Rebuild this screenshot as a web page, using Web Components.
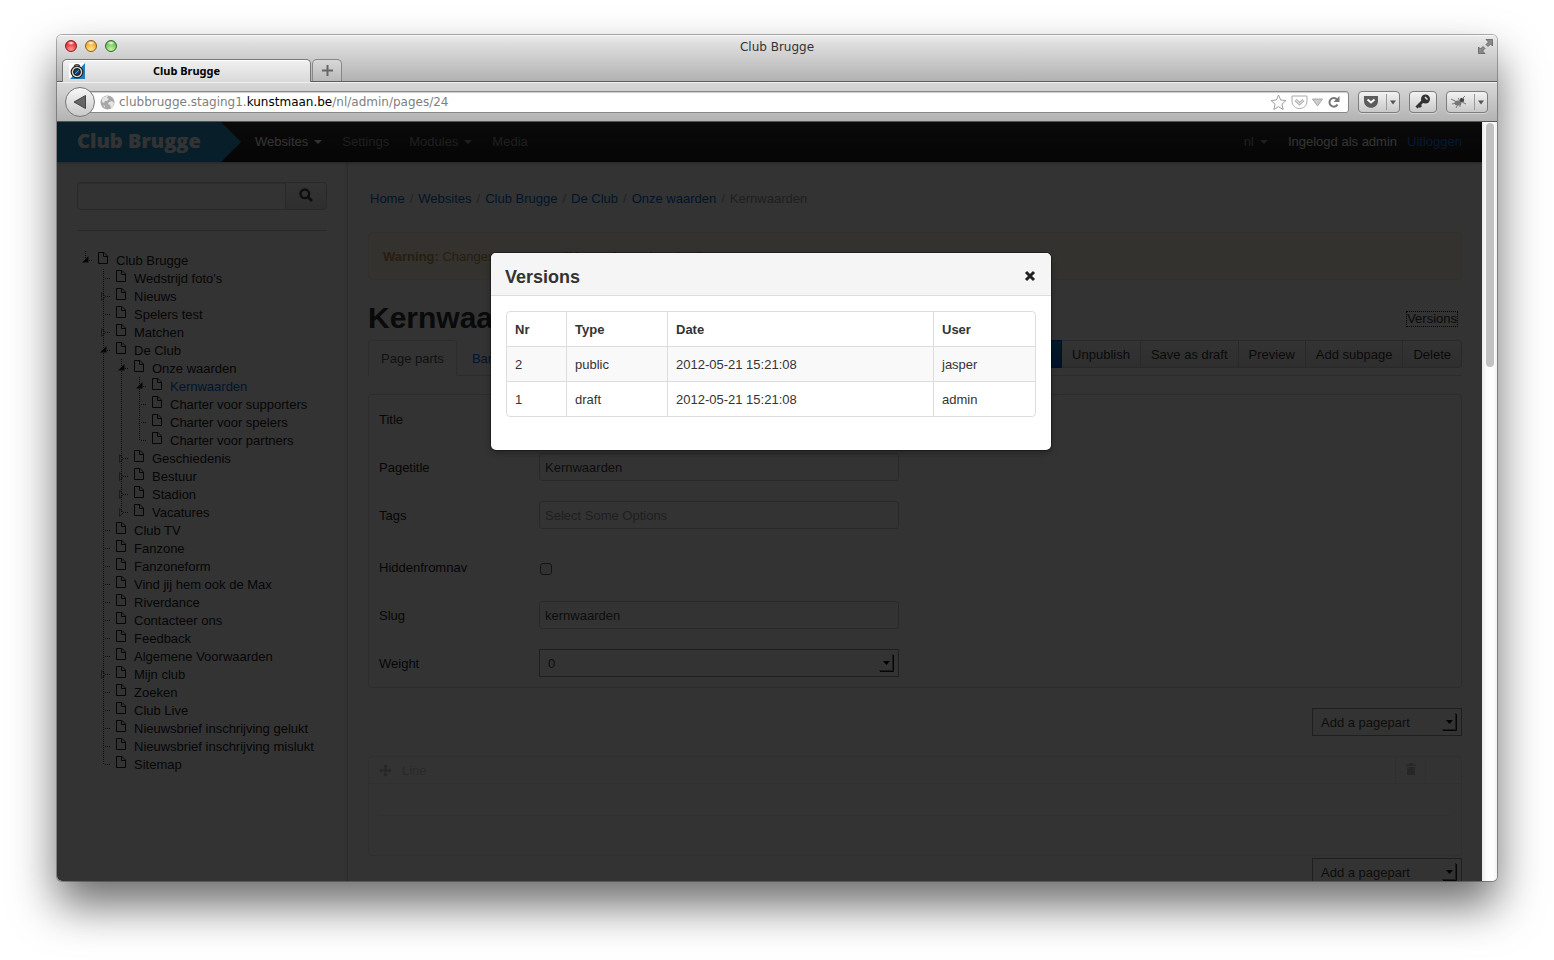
<!DOCTYPE html>
<html lang="nl">
<head>
<meta charset="utf-8">
<meta name="viewport" content="width=device-width, initial-scale=1">
<title>Club Brugge</title>
<style>
  html, body { margin: 0; height: 100%; }
  body {
    box-sizing: border-box;
    padding: 35px 57px 79px;
    overflow: hidden;
    background: #fff;
    --ui-font: "Liberation Sans", Arial, sans-serif;
    --chrome-font: "DejaVu Sans", sans-serif;
    --link: #0069d6;
    font: 13px/18px var(--ui-font);
    color: #333;
  }
</style>
</head>
<body>
<browser-window>
  <browser-titlebar slot="chrome"></browser-titlebar>
  <browser-toolbar slot="chrome"></browser-toolbar>
  <admin-navbar></admin-navbar>
  <admin-layout>
    <admin-sidebar slot="side"></admin-sidebar>
    <page-header></page-header>
    <page-form></page-form>
    <add-pagepart></add-pagepart>
    <page-part></page-part>
    <add-pagepart></add-pagepart>
  </admin-layout>
  <versions-modal slot="overlay"></versions-modal>
</browser-window>

<script>
const define = (name, html, setup) => {
  const tpl = document.createElement('template');
  tpl.innerHTML = html;
  customElements.define(name, class extends HTMLElement {
    constructor() {
      super();
      this.attachShadow({ mode: 'open' }).append(tpl.content.cloneNode(true));
      if (setup) setup(this.shadowRoot, this);
    }
  });
};

define('browser-window', `
<style>
  :host {
    display: flex; flex-direction: column; height: 100%; overflow: hidden;
    border-radius: 5px; background: #fff;
    box-shadow: 0 0 0 1px rgba(0,0,0,.3), 0 24px 45px rgba(0,0,0,.58);
  }
  .body { flex: 1; min-height: 0; display: flex; }
  .view { flex: 1; min-width: 0; position: relative; overflow: hidden; background: #fff; }
  .scroll { width: 15px; box-sizing: border-box; padding: 1px 3px 0 4px; background: linear-gradient(90deg,#e8e8e8,#fbfbfb 4px,#fff 11px,#f0f0f0); }
  .thumb { height: 244px; border-radius: 4px; background: #c1c1c1; }
</style>
<slot name="chrome"></slot>
<div class="body">
  <div class="view"><slot></slot><slot name="overlay"></slot></div>
  <div class="scroll"><div class="thumb"></div></div>
</div>`);

define('browser-titlebar', `
<style>
  :host {
    display: grid; grid-template-rows: 24px 22px; font-family: var(--chrome-font);
    background: linear-gradient(#ececec, #dcdcdc 10px, #b2b2b2 46px);
    border-bottom: 1px solid #5c5c5c; box-shadow: inset 0 1px #f8f8f8; color: #333;
  }
  .top { display: grid; grid-template-columns: 1fr auto 1fr; align-items: center; padding: 0 4px; }
  .lights { display: flex; gap: 8px; margin-top: -2px; padding-left: 4px; }
  .light { width: 12px; height: 12px; box-sizing: border-box; border-radius: 50%; border: 1px solid var(--edge); background: radial-gradient(ellipse 4px 2px at 50% 20%, #fff, transparent), radial-gradient(circle at 50% 85%, var(--hi), var(--c) 75%); }
  .red { --c: #e2222b; --hi: #ff9a92; --edge: #93191c; }
  .yellow { --c: #f0a428; --hi: #ffe896; --edge: #8f5d12; }
  .green { --c: #63bd4f; --hi: #c5f5a6; --edge: #2f6c28; }
  h1 { margin: 0; font-size: 12px; font-weight: 400; line-height: 24px; }
  .full { justify-self: end; margin-top: -2px; }
  .tabs { display: flex; align-items: flex-start; padding-left: 5px; }
  .tab {
    box-sizing: border-box; width: 249px; height: 23px; margin-bottom: -1px; padding: 0 6px;
    display: grid; grid-template-columns: 16px 1fr 16px; align-items: center;
    border: 1px solid #777; border-bottom: 0; border-radius: 5px 5px 0 0; box-shadow: inset 0 1px #fff;
    background: linear-gradient(#f1f1f1, #d9d9d9); color: #000; font: 700 11px/18px "Noto Sans", sans-serif; text-align: center;
  }
  .new { box-sizing: border-box; width: 30px; height: 22px; margin-left: 1px; padding: 0; border: 1px solid #888; border-bottom: 0; border-radius: 5px 5px 0 0; background: linear-gradient(#d8d8d8,#b9b9b9); display: grid; place-items: center; }
</style>
<div class="top">
  <div class="lights"><span class="light red"></span><span class="light yellow"></span><span class="light green"></span></div>
  <h1>Club Brugge</h1>
  <svg class="full" width="15" height="15" viewBox="0 0 15 15" fill="#8a8a8a" stroke="#555" stroke-width=".7"><path d="M8 .5h6.500v6.500l-2-2-2.500 2.500-2-2L10.500 3zM7 14.500H.500V8l2 2L5 7.500l2 2L4.500 12z"/></svg>
</div>
<div class="tabs">
  <div class="tab">
    <svg width="16" height="16" viewBox="0 0 16 16"><path fill="#fff" d="M0 0h16v16H0z"/><path fill="#1c7fc4" d="M16 0v16H1z"/><circle cx="8" cy="9" r="5.800" fill="#d8d4c4" stroke="#222" stroke-width="1.200"/><circle cx="8" cy="9" r="3.400" fill="#10456c" stroke="#111"/><path stroke="#5aa9d8" d="M6 11l4-4"/><path d="M5 3.500C6 1 10 1 11 3.500" fill="none" stroke="#333" stroke-width="1.200"/></svg>
    <span>Club Brugge</span>
  </div>
  <button class="new" aria-label="Nieuw tabblad"><svg width="11" height="11" viewBox="0 0 11 11"><path d="M5.500 0v11M0 5.500h11" stroke="#666" stroke-width="2"/></svg></button>
</div>`);

define('browser-toolbar', `
<style>
  :host { display: flex; align-items: center; height: 40px; box-sizing: border-box; padding: 1px 9px 0 8px; gap: 9px;
    background: linear-gradient(#d9d9d9, #b3b3b3); box-shadow: inset 0 1px #f0f0f0; border-bottom: 1px solid #555; font-family: var(--chrome-font); }
  .loc { flex: 1; display: flex; align-items: center; }
  button { margin: 0; padding: 0; font: inherit; }
  .back { position: relative; box-sizing: border-box; flex: none; width: 30px; height: 30px; border: 1px solid #777; border-radius: 50%; background: linear-gradient(#f8f8f8,#c8c8c8); display: grid; place-items: center; }
  .url { flex: 1; min-width: 0; display: flex; align-items: center; gap: 4px; height: 22px; box-sizing: border-box; margin-left: -8px; padding: 0 4px 0 12px;
    border: 1px solid #888; border-radius: 0 3px 3px 0; background: #fff; box-shadow: inset 0 1px 1px #ccc; }
  .addr { flex: 1; font-size: 12px; line-height: 20px; color: #808080; white-space: nowrap; }
  .addr b { font-weight: 400; color: #000; }
  .end { display: flex; align-items: center; gap: 4px; }
  .btn { display: flex; align-items: center; justify-content: center; height: 22px; box-sizing: border-box; width: 42px; border: 1px solid #7c7c7c; border-radius: 4px; background: linear-gradient(#f2f2f2,#c9c9c9); box-shadow: 0 1px rgba(255,255,255,.4); }
  .key { width: 28px; }
</style>
<div class="loc">
  <button class="back" aria-label="Terug"><svg width="14" height="14" viewBox="0 0 14 14"><path d="M1 7l11.500-6.500v13z" fill="#666" stroke="#444"/></svg></button>
  <div class="url">
    <svg width="15" height="15" viewBox="0 0 15 15"><circle cx="7.500" cy="7.500" r="7" fill="#a8a8a8"/><path d="M2 4c2-3 4-3 6-3L7 3l2 1-2 2-2 0-1 2-2-1zM9 7l3-1 2 2-1 4-2 1-1-3-2-1zM3 10l2 1v2z" fill="#e4e4e4"/></svg>
    <span class="addr">clubbrugge.staging1.<b>kunstmaan.be</b>/nl/admin/pages/24</span>
    <span class="end">
      <svg width="17" height="17" viewBox="0 0 17 17"><path d="M8.500 1l2.200 5 5.300.5-4 3.600 1.200 5.400-4.700-2.800-4.700 2.800L5 10.100 1 6.500 6.300 6z" fill="#fafafa" stroke="#a0a0a0"/></svg>
      <svg width="17" height="15" viewBox="0 0 17 15"><path d="M1 1h15v5c0 10-15 10-15 0z" fill="none" stroke="#aaa"/><path d="M4.500 5l4 3.800 4-3.800" fill="none" stroke="#aaa" stroke-width="3"/><path d="M4.500 5l4 3.800 4-3.800" fill="none" stroke="#fff"/></svg>
      <svg width="11" height="9" viewBox="0 0 11 9"><path d="M.5 1h10l-5 7z" fill="#ccc" stroke="#aaa"/></svg>
      <svg width="17" height="14" viewBox="3 0 17 14"><path d="M13.500 9.500A4.300 4.300 0 1 1 13 4.500" fill="none" stroke="#777" stroke-width="2"/><path d="M15.500 1v6h-6z" fill="#777"/></svg>
    </span>
  </div>
</div>
<button class="btn" aria-label="Pocket"><svg width="34" height="16" viewBox="0 0 34 16"><path d="M2 2h14v5c0 9-14 9-14 0z" fill="#5c5c5c"/><path d="M5.500 5.500L9 8.500l3.500-3" fill="none" stroke="#fff" stroke-width="2"/><path d="M24.500 0v16" stroke="#999"/><path d="M28 6.500h6l-3 4z" fill="#555"/></svg></button>
<button class="btn key" aria-label="Wachtwoorden"><svg width="16" height="16" viewBox="0 0 16 16"><circle cx="10.500" cy="5" r="4.500" fill="#333"/><path d="M8 7l-6.500 6.500M4 11l2 2" stroke="#333" stroke-width="3"/><path d="M10 3l2.500 2.500" stroke="#ddd" stroke-width="1.500"/></svg></button>
<button class="btn" aria-label="Firebug"><svg width="34" height="16" viewBox="0 0 34 16"><ellipse cx="8" cy="9" rx="3.500" ry="2.500" fill="#777"/><circle cx="12" cy="6" r="2.200" fill="#444"/><path d="M1 5l6 3M2 10l5-1M6 14l2-4M10 13l0-4M12 8l4 2M12 5l3-3M8 4l2 3" stroke="#777" fill="none"/><path d="M24.500 0v16" stroke="#999"/><path d="M28 6.500h6l-3 4z" fill="#555"/></svg></button>
`);

define('admin-navbar', `
<style>
  :host { display: flex; height: 40px; padding-right: 20px; background: linear-gradient(#333, #1c1c1c); line-height: 40px; color: #999; box-shadow: 0 1px 3px rgba(0,0,0,.3); position: relative; }
  a { color: inherit; text-decoration: none; }
  .brand { box-sizing: border-box; width: 184px; padding-left: 20px; font: 800 20px/38px "Open Sans", sans-serif; color: #fff;
    background: linear-gradient(#2b94c6, #259ad2); clip-path: polygon(0 0, 164px 0, 100% 50%, 164px 100%, 0 100%); }
  nav { flex: 1; display: flex; gap: 20px; padding-left: 14px; }
  .drop { display: flex; align-items: center; gap: 6px; }
  .drop::after { content: ""; border: 4px solid transparent; border-top-color: currentColor; border-bottom: 0; }
  .on { color: #fff; }
  .user { display: flex; gap: 10px; }
  .user .drop { margin-right: 10px; }
  .out { color: #1a80ee; }
</style>
<a class="brand" href="#">Club Brugge</a>
<nav><a class="drop on" href="#">Websites</a><a href="#">Settings</a><a class="drop" href="#">Modules</a><a href="#">Media</a></nav>
<div class="user"><a class="drop" href="#">nl</a><span class="on">Ingelogd als admin</span><a class="out" href="#">Uitloggen</a></div>`);

define('admin-layout', `
<style>
  :host { display: grid; grid-template-columns: 291px 1fr; min-height: 100%; }
  .side { border-right: 1px solid #ddd; box-shadow: inset -3px 0 3px -2px #ddd; }
  main { padding: 28px 20px 0; min-width: 0; }
</style>
<div class="side"><slot name="side"></slot></div>
<main><slot></slot></main>`);

define('admin-sidebar', `
<style>
  :host { display: block; padding: 20px; }
  form { display: flex; height: 28px; }
  input { flex: 1; min-width: 0; box-sizing: border-box; border: 1px solid #ccc; border-radius: 3px 0 0 3px; padding: 4px; background: #fff; box-shadow: inset 0 1px 1px #ddd; }
  button { width: 42px; box-sizing: border-box; margin-left: -1px; padding: 0; border: 1px solid #ccc; border-radius: 0 3px 3px 0; background: linear-gradient(#fff,#e6e6e6); }
  hr { margin: 20px 0; border: 0; border-top: 1px solid #ccc; }
</style>
<form><input type="text" aria-label="Zoeken"><button type="button" aria-label="Zoek"><svg width="14" height="14" viewBox="0 0 14 14" fill="none" stroke="#444"><circle cx="5.800" cy="5.800" r="4.300" stroke-width="2.400"/><path d="M9 9l4 4" stroke-width="2.800"/></svg></button></form>
<hr>
<site-tree></site-tree>`);

const TREE = [['Club Brugge', [
  ['Wedstrijd foto\u0027s'], ['Nieuws', 1], ['Spelers test'], ['Matchen', 1],
  ['De Club', [
    ['Onze waarden', [
      ['Kernwaarden', [], true], ['Charter voor supporters'], ['Charter voor spelers'], ['Charter voor partners']]],
    ['Geschiedenis', 1], ['Bestuur', 1], ['Stadion', 1], ['Vacatures', 1]]],
  ['Club TV'], ['Fanzone'], ['Fanzoneform'], ['Vind jij hem ook de Max'], ['Riverdance'], ['Contacteer ons'],
  ['Feedback'], ['Algemene Voorwaarden'], ['Mijn club', 1], ['Zoeken'], ['Club Live'],
  ['Nieuwsbrief inschrijving gelukt'], ['Nieuwsbrief inschrijving mislukt'], ['Sitemap']]]];

const branch = (nodes) => `<ul>${nodes.map(([name, kids, on]) => {
  const mark = kids === 1 ? '<path d="M1.500 5.500v8l4-4z" fill="none" stroke="#888"/>'
    : kids ? '<path d="M0 11.500h6.500V5z" fill="#222"/>' : '';
  return `<li><a href="#"${on ? ' class="on"' : ''}>
    <svg width="12" height="18" viewBox="0 0 12 18"><path d="M5 9.500h6" stroke="#333" stroke-dasharray="1 1"/>${mark}</svg>
    <svg width="10" height="12" viewBox="0 0 10 12"><path d="M.5.5h5.500l3.500 3.500v7.500h-9zM5.500.5v4h4" fill="none" stroke="#222"/></svg>
    <span>${name}</span></a>${Array.isArray(kids) && kids.length ? branch(kids) : ''}</li>`;
}).join('')}</ul>`;

define('site-tree', `
<style>
  :host { display: block; padding-left: 5px; }
  ul { list-style: none; margin: 0; padding: 0; }
  ul ul { padding-left: 18px; }
  li { background: repeating-linear-gradient(#333 0 1px, transparent 1px 2px) 3px 0 / 1px 100% no-repeat; }
  li:last-child { background-size: 1px 10px; }
  a { display: grid; grid-template-columns: 12px 10px auto; justify-content: start; height: 18px; align-items: start; color: #222; text-decoration: none; white-space: nowrap; }
  svg + svg { margin: 1px 0 0 4px; }
  span { padding: 1px 0 0 12px; }
  .on span { color: var(--link); }
</style>${branch(TREE)}`);

define('page-header', `
<style>
  :host { display: block; }
  a { color: var(--link); text-decoration: none; }
  ol { display: flex; list-style: none; margin: 0 0 24px; padding: 0 2px; color: #999; }
  li + li::before { content: "/"; padding: 0 5px; color: #aaa; }
  .alert { padding: 15px 14px 13px; border: 1px solid #fbeed5; border-radius: 4px; background: #fcf8e3; color: #c09853; }
  .head { display: flex; justify-content: space-between; align-items: center; margin: 20px 0 5px; padding-right: 5px; }
  h2 { margin: 0; font-size: 30px; line-height: 35px; color: #333; }
  .versions { color: #333; line-height: 14px; margin-top: 3px; outline: 1px dotted #000; }
  .bar { display: flex; justify-content: space-between; height: 35px; border-bottom: 1px solid #ddd; }
  .tabs { display: flex; }
  .tabs a { box-sizing: border-box; height: 36px; padding: 9px 14px; border: 1px solid transparent; }
  .tabs .on { padding: 9px 12px; color: #555; border-color: #ddd #ddd #fff; border-radius: 4px 4px 0 0; background: #fff; }
  .actions { display: flex; height: 28px; }
  button { margin: 0; padding: 1px 10px 0; font: inherit; color: #333; border: 1px solid #ccc; border-left-width: 0; background: linear-gradient(#fff,#e6e6e6); white-space: nowrap; }
  button:last-child { border-radius: 0 4px 4px 0; }
  .primary { color: #fff; border: 1px solid #04c; border-radius: 4px 0 0 4px; background: linear-gradient(#08c,#0055cc); }
</style>
<ol><li><a href="#">Home</a></li><li><a href="#">Websites</a></li><li><a href="#">Club Brugge</a></li><li><a href="#">De Club</a></li><li><a href="#">Onze waarden</a></li><li>Kernwaarden</li></ol>
<div class="alert"><strong>Warning:</strong> Changes you save will be performed on the live page</div>
<div class="head"><h2>Kernwaarden</h2><a class="versions" href="#">Versions</a></div>
<div class="bar">
  <div class="tabs"><a class="on" href="#">Page parts</a><a href="#">Banners</a></div>
  <div class="actions"><button class="primary">Save</button><button>Unpublish</button><button>Save as draft</button><button>Preview</button><button>Add subpage</button><button>Delete</button></div>
</div>`);

define('arrow-select', `
<style>
  :host { display: grid; height: 28px; }
  select, svg { grid-area: 1 / 1; }
  select { appearance: none; width: 100%; height: 28px; box-sizing: border-box; margin: 0; padding: 1px 8px 0; border: 1px solid #999; border-radius: 0; background: #fff; font: inherit; color: #444; }
  svg { justify-self: end; align-self: center; margin-right: 5px; pointer-events: none; }
</style>
<select><option></option></select>
<svg width="15" height="18" viewBox="0 0 15 18"><path d="M1 17.500h13.500V1" fill="none" stroke="#222"/><path d="M0 16.500h13.500V0" fill="none" stroke="#888"/><path d="M4 7h7l-3.500 4z" fill="#000"/></svg>`,
(root, host) => {
  root.querySelector('option').textContent = host.getAttribute('value');
  root.querySelector('select').setAttribute('aria-label', host.getAttribute('label'));
});

define('page-form', `
<style>
  :host { display: block; margin-top: 18px; padding: 10px; border: 1px solid #ddd; border-radius: 4px; }
  .row { display: grid; grid-template-columns: 160px 360px; align-items: center; min-height: 28px; margin-bottom: 20px; color: #222; }
  .row:last-child { margin-bottom: 0; }
  .check { padding-top: 4px; }
  label, span { padding-top: 1px; }
  input[type=text] { width: 100%; height: 28px; box-sizing: border-box; padding: 0 5px; border: 1px solid #ccc; border-radius: 3px; background: #fff; font: inherit; color: #444; }
  input[type=text]::placeholder { color: #999; opacity: 1; }
  input[type=checkbox] { appearance: none; box-sizing: border-box; width: 12px; height: 12px; margin: 4px 0 0 1px; border: 1px solid #666; border-radius: 3px; background: #f4f4f4; }
</style>
<div class="row"><label for="t">Title</label><input id="t" type="text" value="Kernwaarden"></div>
<div class="row"><label for="p">Pagetitle</label><input id="p" type="text" value="Kernwaarden"></div>
<div class="row"><label for="g">Tags</label><input id="g" type="text" placeholder="Select Some Options"></div>
<div class="row check"><label for="h">Hiddenfromnav</label><input id="h" type="checkbox"></div>
<div class="row"><label for="s">Slug</label><input id="s" type="text" value="kernwaarden"></div>
<div class="row"><span>Weight</span><arrow-select label="Weight" value="0"></arrow-select></div>`);

define('add-pagepart', `
<style>:host { display: flex; justify-content: flex-end; margin: 20px 0; } arrow-select { width: 150px; }</style>
<arrow-select label="Pagepart" value="Add a pagepart"></arrow-select>`);

define('page-part', `
<style>
  :host { display: block; height: 98px; margin-bottom: -18px; border: 1px solid #e8e8e8; border-radius: 4px; color: #ccc; }
  header { display: flex; height: 26px; align-items: center; gap: 10px; padding-left: 10px; border-bottom: 1px solid #f1f1f1; }
  span { flex: 1; padding-top: 1px; }
  button { width: 31px; height: 26px; padding: 0; margin-right: 35px; border: solid #f1f1f1; border-width: 0 1px; background: none; }
  hr { margin: 31px 10px 0; border: 0; border-top: 1px solid #f3f3f3; }
</style>
<header>
  <svg width="13" height="13" viewBox="0 0 13 13" fill="#c0c0c0"><path d="M6.500 0L9 3H7.500v2.500H10V4l3 2.500L10 9V7.500H7.500V10H9l-2.500 3L4 10h1.500V7.500H3V9L0 6.500 3 4v1.500h2.500V3H4z"/></svg>
  <span>Line</span>
  <button aria-label="Verwijder"><svg width="10" height="12" viewBox="0 0 10 12" fill="#c0c0c0"><path d="M0 1.500h3V0h4v1.500h3V3H0zM1 4h8v8H1z"/></svg></button>
</header>
<hr>`);

define('versions-modal', `
<style>
  :host { position: absolute; inset: 0; display: flex; justify-content: center; align-items: flex-start; padding: 131px 0 0 3px; background: rgba(0,0,0,.8); }
  section { width: 560px; border-radius: 5px; background: #fff; overflow: hidden; box-shadow: 0 3px 7px rgba(0,0,0,.3), 0 0 0 1px rgba(0,0,0,.3); }
  header { display: flex; justify-content: space-between; align-items: center; height: 42px; padding: 0 15px 0 14px; background: #f5f5f5; border-bottom: 1px solid #ddd; }
  h3 { margin: 6px 0 0; font-size: 18px; line-height: 27px; color: #333; }
  header button { margin: 3px 0 0; padding: 0; border: 0; background: none; display: grid; }
  table { width: calc(100% - 30px); margin: 15px 15px 33px; table-layout: fixed; border: 1px solid #ddd; border-radius: 4px; border-spacing: 0; text-align: left; color: #333; }
  th, td { padding: 9px 8px 7px; line-height: 18px; }
  tr > * + * { border-left: 1px solid #ddd; }
  tbody td { border-top: 1px solid #ddd; }
  tbody tr:first-child td { background: #f9f9f9; }
</style>
<section role="dialog" aria-modal="true" aria-labelledby="h">
  <header><h3 id="h">Versions</h3><button aria-label="Sluiten"><svg width="12" height="12" viewBox="0 0 12 12"><path d="M2 2l8 8M10 2l-8 8" stroke="#222" stroke-width="3"/></svg></button></header>
  <table>
    <colgroup><col style="width:59px"><col style="width:101px"><col style="width:266px"><col></colgroup>
    <thead><tr><th>Nr</th><th>Type</th><th>Date</th><th>User</th></tr></thead>
    <tbody>
      <tr><td>2</td><td>public</td><td>2012-05-21 15:21:08</td><td>jasper</td></tr>
      <tr><td>1</td><td>draft</td><td>2012-05-21 15:21:08</td><td>admin</td></tr>
    </tbody>
  </table>
</section>`);
</script>
</body>
</html>
